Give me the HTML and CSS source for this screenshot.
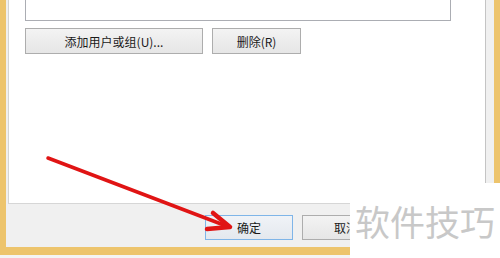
FILE: index.html
```html
<!DOCTYPE html>
<html lang="zh-CN">
<head>
    <meta charset="UTF-8">
    <title>权限</title>
    <link rel="stylesheet" href="styles.css">
</head>
<body>
    <div class="frame">
        <div class="window">
            <div class="panel">
                <div class="listbox"></div>
                <div class="row">
                    <button class="btn btn-wide">添加用户或组(U)...</button>
                    <button class="btn">删除(R)</button>
                </div>
            </div>
            <div class="footer">
                <button class="btn btn-ok">确定</button>
                <button class="btn">取消</button>
            </div>
        </div>
    </div>

    <svg class="arrow" width="500" height="258" viewBox="0 0 500 258">
        <path d="M48 158 L229 227" stroke="#e01414" stroke-width="3.5" stroke-linecap="round" fill="none"/>
        <path d="M213 213 L230 227 L207 229" stroke="#e01414" stroke-width="4.5" stroke-linecap="round" stroke-linejoin="round" fill="none"/>
    </svg>

    <div class="watermark">软件技巧</div>
</body>
</html>
```

FILE: styles.css
```css
body {
    margin: 0;
    width: 500px;
    height: 258px;
    overflow: hidden;
    background: #f4f4f4;
    font-family: "Noto Sans CJK SC", "Liberation Sans", sans-serif;
    font-size: 12px;
    color: #1a1a1a;
}
.frame {
    height: 247px;
    padding: 0 6px 8px 6px;
    background: #edc46c;
}
.window {
    height: 247px;
    background: #f0f0f0;
    padding: 0 8px 0 2px;
    display: flex;
    flex-direction: column;
}
.panel {
    height: 204px;
    box-sizing: border-box;
    background: #fff;
    border-left: 1px solid #d4d4d4;
    border-right: 1px solid #c4c4c4;
    border-bottom: 1px solid #d6d6d6;
    padding: 0 34px 0 16px;
    display: flex;
    flex-direction: column;
}
.listbox {
    height: 20px;
    border: 1px solid #abadb3;
    border-top: none;
}
.row {
    display: flex;
    gap: 9px;
    margin-top: 7px;
}
.btn {
    font-family: inherit;
    font-size: 12px;
    color: #1a1a1a;
    height: 26px;
    width: 89px;
    padding: 0;
    border: 1px solid #adadad;
    background: linear-gradient(#f3f3f3, #e6e6e6);
}
.btn-wide {
    width: 178px;
}
.footer {
    display: flex;
    gap: 9px;
    padding: 11px 0 0 197px;
}
.footer .btn {
    width: 88px;
    height: 25px;
    flex-shrink: 0;
}
.footer .btn-ok {
    border-color: #7fb5e8;
    background: linear-gradient(#f0f3f7, #e4e8ee);
}
.arrow {
    position: absolute;
    left: 0;
    top: 0;
}
.watermark {
    position: absolute;
    left: 350px;
    top: 183px;
    width: 150px;
    height: 75px;
    background: #fff;
    color: #c8c8c8;
    font-size: 35px;
    line-height: 58px;
    padding: 9px 0 0 5px;
    box-sizing: border-box;
    white-space: nowrap;
}
```
